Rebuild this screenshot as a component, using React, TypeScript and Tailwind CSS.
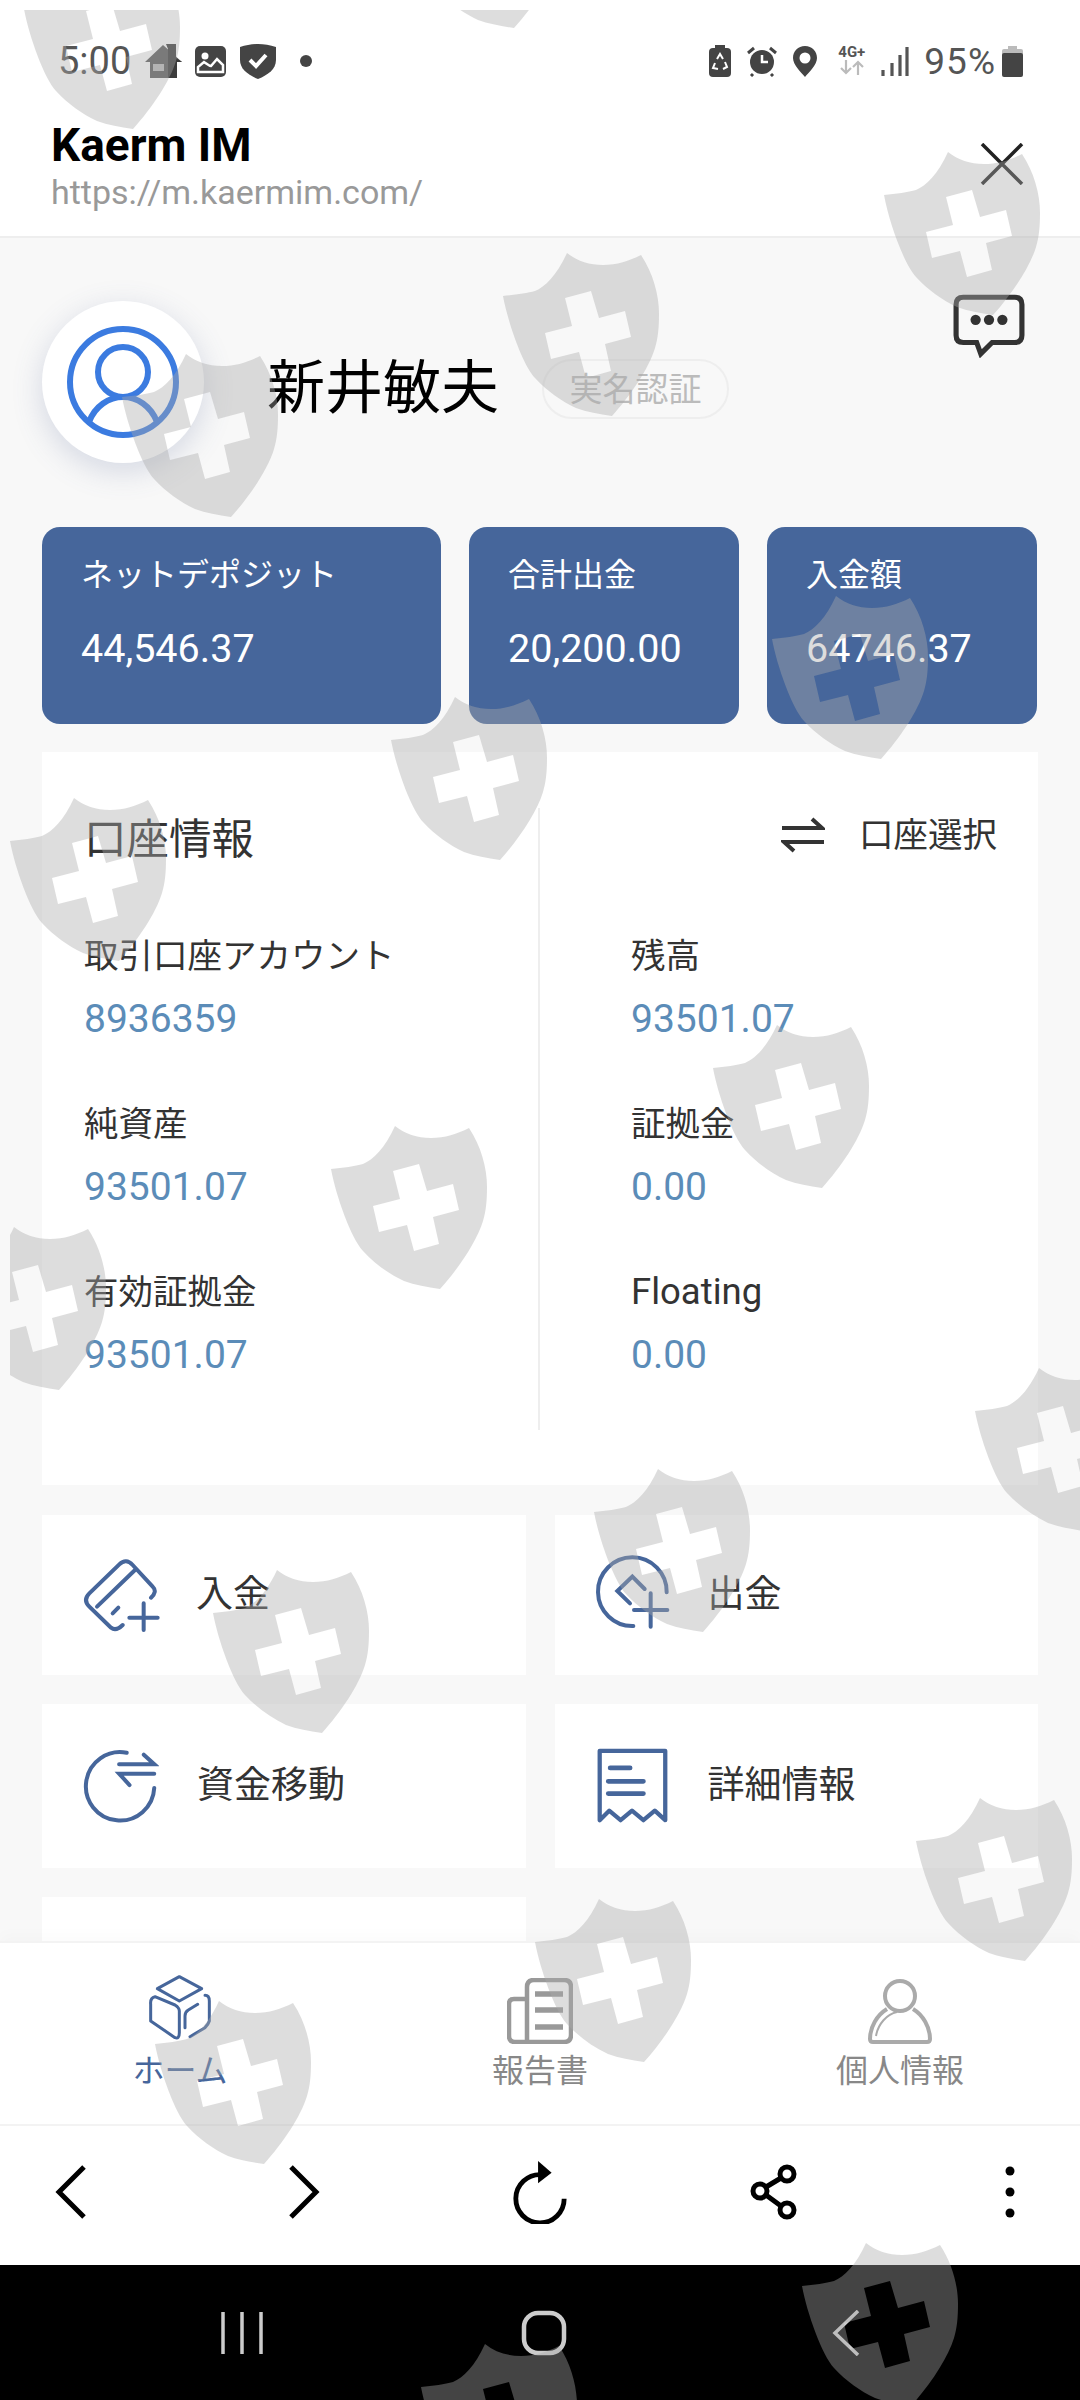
const SHIELD_SPOTS = [
  [24, -34], [405, -135], [884, 152], [503, 253], [122, 354],
  [772, 596], [391, 697], [10, 798], [713, 1025], [331, 1126], [-50, 1227],
  [975, 1368], [594, 1469], [213, 1570], [916, 1798], [535, 1899], [155, 2001],
  [802, 2243], [421, 2344],
];

const SHIELD_PATH =
  "M64 0C74 8 86 12 100 12C114 12 126 8 138 2C150 20 156 42 156 61C156 75 155 85 152 95C146 115 128 142 109 163C96 161 84 159 73 155C58 148 44 138 32 125C20 112 5 70 0 43C12 42 24 40 32 38C42 34 54 22 64 0Z" +
  "M62 45L88 38L96 65L122 58L128 84L102 91L108 118L83 125L76 99L48 106L42 80L69 73Z";

function Watermark() {
  return (
    <svg
      className="absolute left-[10px] top-[10px] pointer-events-none"
      width={1070}
      height={2390}
      viewBox="10 10 1070 2390"
    >
      {SHIELD_SPOTS.map(([x, y]) => (
        <path key={`${x}-${y}`} d={SHIELD_PATH} transform={`translate(${x} ${y})`} fill="#aaaaaa" fillOpacity={0.4} fillRule="evenodd" />
      ))}
    </svg>
  );
}

function StatusLeft() {
  return (
    <div className="flex items-center pt-[2px]">
      <span className="text-[38px] leading-none text-[#555] mr-[14px]">5:00</span>
      <svg width={37} height={34} viewBox="0 0 37 34" className="mr-[13px]">
        <path d="M0 18L18 1L37 18H32V34H5V18Z" fill="#5a5a5a" />
        <path d="M21 0H31V14L37 18H32V34H23V5Z" fill="#3c3c3c" />
        <rect x={8} y={20} width={11} height={7} fill="#bbb" />
      </svg>
      <svg width={31} height={31} viewBox="0 0 31 31" className="mr-[14px]">
        <rect width={31} height={31} rx={5} fill="#444" />
        <circle cx={10} cy={10} r={3.5} fill="#fff" />
        <path d="M3 26V21L9 16C12 18 14 20 16 20L22 13L28 19V26Z" fill="none" stroke="#fff" strokeWidth={2.5} />
      </svg>
      <svg width={36} height={36} viewBox="0 0 36 36" className="mr-[24px]">
        <path d="M0 4C12 0 24 0 36 4V17C36 26 28 32 18 36C8 32 0 26 0 17Z" fill="#444" />
        <path d="M10 17L16 23L26 12" fill="none" stroke="#fff" strokeWidth={4} />
      </svg>
      <span className="w-[12px] h-[12px] rounded-full bg-[#444]" />
    </div>
  );
}

function StatusRight() {
  return (
    <div className="flex items-center pt-[2px]">
      <svg width={22} height={32} viewBox="0 0 22 32" className="mr-[16px]">
        <rect y={3} width={22} height={29} rx={4} fill="#444" />
        <rect x={6} width={10} height={5} fill="#444" />
        <path d="M8 14L11 9L14 14M16 17L18 22L14 24M9 24L4 23L6 18" fill="none" stroke="#fff" strokeWidth={2} />
      </svg>
      <svg width={30} height={32} viewBox="0 0 30 32" className="mr-[16px]">
        <circle cx={15} cy={17} r={12} fill="#444" />
        <path d="M15 10V17H21" fill="none" stroke="#fff" strokeWidth={2.5} />
        <path d="M1 8L7 3M29 8L23 3M6 29L4 31M24 29L26 31" stroke="#444" strokeWidth={3} />
      </svg>
      <svg width={24} height={31} viewBox="0 0 24 31" className="mr-[18px]">
        <path d="M12 0C5 0 0 5 0 12C0 19 8 26 12 31C16 26 24 19 24 12C24 5 19 0 12 0Z" fill="#444" />
        <circle cx={12} cy={12} r={5.5} fill="#fff" />
      </svg>
      <div className="w-[33px] h-[32px] flex flex-col items-center mr-[13px]">
        <span className="text-[15px] leading-[15px] font-bold text-[#555]">4G+</span>
        <svg width={24} height={15} viewBox="0 0 24 15">
          <path d="M6 0V13M1 8L6 13L11 8M18 15V2M13 7L18 2L23 7" fill="none" stroke="#bbb" strokeWidth={2.2} />
        </svg>
      </div>
      <svg width={28} height={29} viewBox="0 0 28 29" className="mr-[15px]">
        <path d="M2 23V29M11 16V29M19 8V29M26 0V29" stroke="#555" strokeWidth={3.2} />
      </svg>
      <span className="text-[37px] leading-none text-[#555] tracking-[1px] mr-[6px]">95%</span>
      <svg width={21} height={31} viewBox="0 0 21 31">
        <rect x={6} width={9} height={5} fill="#bbb" />
        <rect y={3} width={21} height={7} rx={2} fill="#bbb" />
        <rect y={7} width={21} height={24} rx={2} fill="#444" />
      </svg>
    </div>
  );
}

function UserAvatarIcon() {
  return (
    <svg width={116} height={116} viewBox="-2 -2 116 116" fill="none" stroke="#3b7be0" strokeWidth={6}>
      <circle cx={56} cy={56} r={53} />
      <circle cx={56} cy={46} r={25} />
      <path d="M22 96C28 80 42 71 56 71C70 71 84 80 90 96" />
    </svg>
  );
}

function ChatIcon() {
  return (
    <svg width={72} height={64} viewBox="0 0 70 62" className="ml-auto mr-[13px] -mt-[6px] self-start">
      <path d="M10 3H60Q67 3 67 10V40Q67 47 60 47H38L27 58L23 47H10Q3 47 3 40V10Q3 3 10 3Z" fill="none" stroke="#333" strokeWidth={5} />
      <circle cx={22} cy={25} r={5} fill="#333" />
      <circle cx={35} cy={25} r={5} fill="#333" />
      <circle cx={48} cy={25} r={5} fill="#333" />
    </svg>
  );
}

function SwapIcon() {
  return (
    <svg width={44} height={36} viewBox="0 0 44 36" fill="none" stroke="#333" strokeWidth={4}>
      <path d="M1 11H41L31 2" />
      <path d="M43 25H3L13 34" />
    </svg>
  );
}

function DepositIcon() {
  return (
    <svg width={80} height={80} viewBox="60 40 240 240" fill="none" stroke="#46669b" strokeWidth={12} strokeLinecap="round" className="mr-[35px] -ml-[3px]">
      <path d="M270 168Q290 150 275 135L215 70Q195 48 175 68L85 155Q65 175 85 195L150 258Q165 270 185 250" />
      <path d="M108 195L222 85M155 215L172 198M205 228H290M248 185V265" />
    </svg>
  );
}

function WithdrawIcon() {
  return (
    <svg width={80} height={80} viewBox="40 20 240 240" fill="none" stroke="#46669b" strokeWidth={12} strokeLinecap="round" className="mr-[34px] -ml-[3px]">
      <path d="M258 132A103 103 0 1 0 158 233" />
      <path d="M192 122L155 85L110 128L148 165M160 185H260M210 135V235" />
    </svg>
  );
}

function TransferIcon() {
  return (
    <svg width={76} height={76} viewBox="0 0 80 80" fill="none" stroke="#46669b" strokeWidth={4.2} strokeLinecap="round" className="mr-[38px] -ml-[1px]">
      <path d="M46 5A36 36 0 1 0 75 42" />
      <path d="M38 17H75L64 7M75 27H38L49 39" />
    </svg>
  );
}

function ReceiptIcon() {
  return (
    <svg width={76} height={76} viewBox="0 0 80 80" fill="none" stroke="#46669b" strokeWidth={4.5} className="mr-[38px] -ml-[3px]">
      <path d="M6 3H75V76L64 66L52 76L40 66L28 76L16 66L6 76Z" strokeLinejoin="round" />
      <path d="M17 21H38M15 35H52M15 48H52" strokeWidth={5} strokeLinecap="round" />
    </svg>
  );
}

function HomeTabIcon() {
  return (
    <svg width={80} height={80} viewBox="30 14 240 240" fill="none" stroke="#46669b" strokeWidth={9} strokeLinecap="round" strokeLinejoin="round">
      <path d="M148 52L215 88L148 125L82 88Z" />
      <path d="M75 112Q60 115 62 135V185L135 235Q148 240 148 220V155Q148 145 135 137Z" />
      <path d="M225 108Q238 108 238 125V185Q235 195 225 205L180 232M203 135L175 152Q165 158 165 170V205" />
    </svg>
  );
}

function ReportTabIcon() {
  return (
    <svg width={66} height={66} viewBox="0 0 66 66" fill="none" stroke="#999" strokeWidth={4.5}>
      <path d="M20 64V9Q20 2 27 2H57Q64 2 64 9V57Q64 64 57 64H8Q2 64 2 58V26Q2 21 7 21H20" />
      <path d="M28 16H56M28 32H56M28 49H56" strokeWidth={5.5} />
    </svg>
  );
}

function PersonTabIcon() {
  return (
    <svg width={66} height={66} viewBox="0 0 66 66" fill="none" stroke="#aaa" strokeWidth={4}>
      <circle cx={33} cy={18} r={15} />
      <path d="M20 31C10 37 3 49 3 61Q3 64 6 64H60Q63 64 63 61C63 49 56 37 46 31" />
      <path d="M9 58C11 46 20 36 30 34" strokeWidth={2} />
    </svg>
  );
}

function ToolbarBack() {
  return (
    <svg width={34} height={54} viewBox="0 0 34 54" fill="none" stroke="#000" strokeWidth={5}>
      <path d="M31 2L6 27L31 52" />
    </svg>
  );
}

function ToolbarForward() {
  return (
    <svg width={34} height={54} viewBox="0 0 34 54" fill="none" stroke="#000" strokeWidth={5}>
      <path d="M3 2L28 27L3 52" />
    </svg>
  );
}

function ToolbarReload() {
  return (
    <svg width={58} height={64} viewBox="0 0 60 66" fill="none" stroke="#000" strokeWidth={5}>
      <path d="M31 15A25 25 0 1 0 55 40" />
      <path d="M28 1L42 13L28 24Z" fill="#000" stroke="none" />
    </svg>
  );
}

function ToolbarShare() {
  return (
    <svg width={52} height={58} viewBox="0 0 52 58" fill="none" stroke="#000" strokeWidth={5}>
      <circle cx={38} cy={11} r={7} />
      <circle cx={11} cy={28} r={7} />
      <circle cx={38} cy={47} r={7} />
      <path d="M17 24L32 15M17 32L32 43" />
    </svg>
  );
}

function ToolbarMore() {
  return (
    <svg width={12} height={54} viewBox="0 0 12 54" fill="#000">
      <circle cx={6} cy={6} r={4.5} />
      <circle cx={6} cy={27} r={4.5} />
      <circle cx={6} cy={48} r={4.5} />
    </svg>
  );
}

const STATS = [
  { label: "ネットデポジット", value: "44,546.37", cls: "w-[399px]" },
  { label: "合計出金", value: "20,200.00", cls: "w-[270px]" },
  { label: "入金額", value: "64746.37", cls: "w-[270px]" },
];

const LEFT_ROWS = [
  { label: "取引口座アカウント", value: "8936359", latin: false },
  { label: "純資産", value: "93501.07", latin: false },
  { label: "有効証拠金", value: "93501.07", latin: false },
];

const RIGHT_ROWS = [
  { label: "残高", value: "93501.07", latin: false },
  { label: "証拠金", value: "0.00", latin: false },
  { label: "Floating", value: "0.00", latin: true },
];

function StatCard({ label, value, cls }: { label: string; value: string; cls: string }) {
  return (
    <div className={`${cls} h-[197px] rounded-[18px] bg-[#46669b] text-white pl-[39px] pt-[26px]`}>
      <div className="text-[32px] leading-[44px]">{label}</div>
      <div className="text-[39.5px] leading-[48px] mt-[28px]">{value}</div>
    </div>
  );
}

function InfoRow({ label, value, latin }: { label: string; value: string; latin: boolean }) {
  return (
    <div className="h-[168px] pt-[1px]">
      <div className={`${latin ? "text-[36.5px]" : "text-[34.5px]"} leading-[40px] text-[#333]`}>{label}</div>
      <div className="text-[39px] leading-[44px] mt-[21px] text-[#5b8cb8]">{value}</div>
    </div>
  );
}

function ActionCard({ icon, label }: { icon: React.ReactNode; label: string }) {
  return (
    <div className="flex-1 bg-white flex items-center pl-[42px] pb-[1px]">
      {icon}
      <span className="text-[37px] leading-none text-[#333]">{label}</span>
    </div>
  );
}

function TabItem({ icon, label, active }: { icon: React.ReactNode; label: string; active?: boolean }) {
  return (
    <div className="flex-1 flex flex-col items-center">
      <div className="h-[80px] flex items-end">{icon}</div>
      <span className={`text-[32px] leading-[40px] mt-[7px] ${active ? "text-[#46669b]" : "text-[#888]"}`}>{label}</span>
    </div>
  );
}

export default function App() {
  return (
    <div className="relative w-[1080px] h-[2400px] overflow-hidden bg-white flex flex-col font-[Roboto,'Noto_Sans_CJK_JP',sans-serif]">
      <div className="h-[120px] flex items-center justify-between pl-[58px] pr-[57px] shrink-0">
        <StatusLeft />
        <StatusRight />
      </div>

      <div className="h-[118px] shrink-0 flex justify-between pl-[51px] pr-[56px] border-b-2 border-[#eeeeee]">
        <div>
          <div className="text-[46px] leading-[50px] font-bold text-black">Kaerm IM</div>
          <div className="text-[34px] leading-[44px] text-[#999]">https://m.kaermim.com/</div>
        </div>
        <svg width={44} height={42} viewBox="0 0 44 42" className="mt-[23px]" fill="none" stroke="#222" strokeWidth={3.5}>
          <path d="M2 1L42 41M42 1L2 41" />
        </svg>
      </div>

      <main className="flex-1 min-h-0 overflow-hidden bg-[#f8f8f8] px-[42px]">
        <div className="flex items-center h-[163px] mt-[62px]">
          <div className="w-[162px] h-[162px] rounded-full bg-white flex items-center justify-center shadow-[0_8px_30px_rgba(80,100,150,0.22)]">
            <UserAvatarIcon />
          </div>
          <span className="text-[58px] leading-none text-black ml-[63px] mt-[12px]">新井敏夫</span>
          <span className="ml-[43px] mt-[14px] w-[187px] h-[60px] rounded-full border-2 border-[#eeeeee] flex items-center justify-center pt-[2px] text-[33px] text-[#bbb]">
            実名認証
          </span>
          <ChatIcon />
        </div>

        <div className="flex gap-[28px] mt-[64px]">
          {STATS.map((s) => (
            <StatCard key={s.label} {...s} />
          ))}
        </div>

        <div className="h-[733px] bg-white mt-[28px] pt-[56px] flex">
          <div className="w-[498px] h-[622px] border-r-2 border-[#eeeeee] pl-[42px]">
            <div className="text-[42.5px] leading-[60px] pt-[2px] text-[#333] h-[127px]">口座情報</div>
            {LEFT_ROWS.map((r) => (
              <InfoRow key={r.label} {...r} />
            ))}
          </div>
          <div className="flex-1 h-[622px] pl-[91px] pr-[41px]">
            <div className="h-[127px] pt-[2px] flex justify-end items-start gap-[34px]">
              <div className="h-[50px] flex items-center"><SwapIcon /></div>
              <span className="text-[34.5px] leading-[50px] text-[#333]">口座選択</span>
            </div>
            {RIGHT_ROWS.map((r) => (
              <InfoRow key={r.label} {...r} />
            ))}
          </div>
        </div>

        <div className="flex gap-[29px] mt-[30px] h-[160px]">
          <ActionCard icon={<DepositIcon />} label="入金" />
          <ActionCard icon={<WithdrawIcon />} label="出金" />
        </div>
        <div className="flex gap-[29px] mt-[29px] h-[164px]">
          <ActionCard icon={<TransferIcon />} label="資金移動" />
          <ActionCard icon={<ReceiptIcon />} label="詳細情報" />
        </div>
        <div className="flex gap-[29px] mt-[29px] h-[160px]">
          <div className="flex-1 bg-white" />
          <div className="flex-1" />
        </div>
      </main>

      <nav className="relative h-[185px] shrink-0 bg-white border-t-2 border-b-2 border-[#f3f3f3] flex pt-[21px] shadow-[0_-6px_14px_rgba(0,0,0,0.02)]">
        <TabItem icon={<HomeTabIcon />} label="ホーム" active />
        <TabItem icon={<ReportTabIcon />} label="報告書" />
        <TabItem icon={<PersonTabIcon />} label="個人情報" />
      </nav>

      <div className="h-[139px] shrink-0 bg-white flex items-center justify-between px-[40px] pb-[8px]">
        <div className="w-[60px] flex justify-center"><ToolbarBack /></div>
        <div className="w-[60px] flex justify-center"><ToolbarForward /></div>
        <div className="w-[60px] flex justify-center"><ToolbarReload /></div>
        <div className="w-[60px] flex justify-center"><ToolbarShare /></div>
        <div className="w-[60px] flex justify-center"><ToolbarMore /></div>
      </div>

      <div className="h-[135px] shrink-0 bg-black flex items-center justify-center gap-[242px] pl-[8px]">
        <div className="w-[60px] flex justify-center">
          <svg width={44} height={46} viewBox="0 0 44 46" stroke="#ccc" strokeWidth={3.5}>
            <path d="M3 2V44M22 2V44M41 2V44" />
          </svg>
        </div>
        <div className="w-[60px] flex justify-center">
          <svg width={46} height={46} viewBox="0 0 46 46" fill="none" stroke="#ccc" strokeWidth={4.5}>
            <rect x={3} y={3} width={40} height={40} rx={14} />
          </svg>
        </div>
        <div className="w-[60px] flex justify-center">
          <svg width={28} height={46} viewBox="0 0 28 46" fill="none" stroke="#ccc" strokeWidth={3.5}>
            <path d="M26 1L3 23L26 45" />
          </svg>
        </div>
      </div>

      <Watermark />
    </div>
  );
}
